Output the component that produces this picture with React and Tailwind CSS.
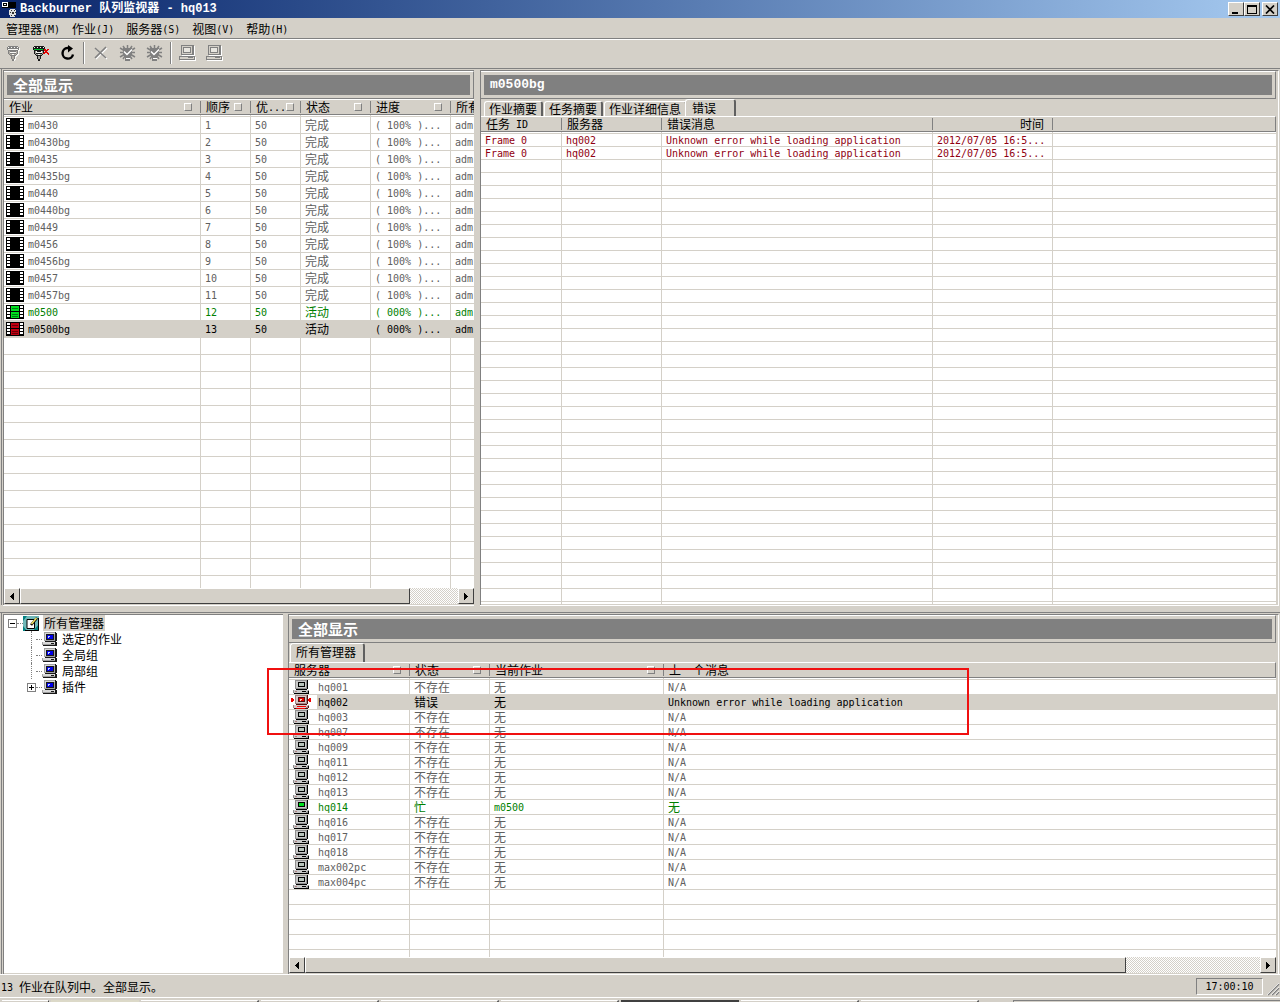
import clsx from "clsx";

// ---------- data ----------

const jobs = [
  ["m0430", "完成"],
  ["m0430bg", "完成"],
  ["m0435", "完成"],
  ["m0435bg", "完成"],
  ["m0440", "完成"],
  ["m0440bg", "完成"],
  ["m0449", "完成"],
  ["m0456", "完成"],
  ["m0456bg", "完成"],
  ["m0457", "完成"],
  ["m0457bg", "完成"],
  ["m0500", "活动", "active"],
  ["m0500bg", "活动", "selected"],
];

const errors = [
  ["Frame 0", "hq002", "Unknown error while loading application", "2012/07/05 16:5..."],
  ["Frame 0", "hq002", "Unknown error while loading application", "2012/07/05 16:5..."],
];

const servers = [
  ["hq001", "不存在", "无", "N/A"],
  ["hq002", "错误", "无", "Unknown error while loading application", "selected"],
  ["hq003", "不存在", "无", "N/A"],
  ["hq007", "不存在", "无", "N/A"],
  ["hq009", "不存在", "无", "N/A"],
  ["hq011", "不存在", "无", "N/A"],
  ["hq012", "不存在", "无", "N/A"],
  ["hq013", "不存在", "无", "N/A"],
  ["hq014", "忙", "m0500", "无", "active"],
  ["hq016", "不存在", "无", "N/A"],
  ["hq017", "不存在", "无", "N/A"],
  ["hq018", "不存在", "无", "N/A"],
  ["max002pc", "不存在", "无", "N/A"],
  ["max004pc", "不存在", "无", "N/A"],
];

const menus = ["管理器(M)", "作业(J)", "服务器(S)", "视图(V)", "帮助(H)"];

const raised =
  "bg-[#d4d0c8] border border-t-white border-l-white border-r-[#404040] border-b-[#404040]";

// ---------- text ----------

// Latin runs are half as wide as the Chinese glyphs
function Txt({ children }) {
  return (
    <span>
      {children.split(/([\x20-\x7e]+)/).map((part, i) =>
        i % 2 ? (
          <span
            key={i}
            className="whitespace-pre align-[1px] font-['DejaVu_Sans_Mono',monospace] text-[10px] leading-[0]"
          >
            {part}
          </span>
        ) : (
          part
        )
      )}
    </span>
  );
}

// ---------- icons ----------

// small bitmap icon: one character per pixel
function Pixels({ rows, colors }) {
  const w = Math.max(...rows.map((r) => r.length));
  return (
    <svg
      width={w}
      height={rows.length}
      viewBox={`0 0 ${w} ${rows.length}`}
      shapeRendering="crispEdges"
      className="block shrink-0"
      aria-hidden="true"
    >
      {rows.flatMap((row, y) =>
        [...row].map((c, x) =>
          colors[c] ? <rect key={`${x}-${y}`} x={x} y={y} width="1" height="1" fill={colors[c]} /> : null
        )
      )}
    </svg>
  );
}

function FilmIcon({ color }) {
  return (
    <svg width="18" height="14" viewBox="0 0 18 14" shapeRendering="crispEdges" className="block shrink-0" aria-hidden="true">
      <rect width="18" height="14" fill="#000" />
      {[1, 4, 7, 10].map((y) => (
        <g key={y} fill="#fff">
          <rect x="1" y={y} width="3" height="2" />
          <rect x="14" y={y} width="3" height="2" />
        </g>
      ))}
      {color && (
        <>
          <rect x="5" y="1" width="8" height="5" fill={color} />
          <rect x="5" y="7" width="8" height="6" fill={color} />
          <path d="M6 3.5h6M6 9.5h6M6 11.5h6" stroke="#000" strokeOpacity=".45" />
        </>
      )}
    </svg>
  );
}

function PcIcon({ screen = "#b8c4bc" }) {
  return (
    <Pixels
      rows={[
        "  ddddddddddddk ",
        "  dggggggggggdk ",
        "  dggkkkkkkkgdk ",
        "  dggksssssk" + "gdk ",
        "  dggkssssskgdk ",
        "  dggkssssskgdk ",
        "  dggkkkkkkkgdk ",
        "  dggggggggggdk ",
        "  ddddddddddddk ",
        "   kkkkkkkkkkk  ",
        "dggggggggggggggd",
        "dgrrgggggkkkkgdk",
        "dggggggggggggddk",
        " kkkkkkkkkkkkkkk",
      ]}
      colors={{ g: "#c8c8c8", d: "#909090", k: "#000", s: screen, r: "#b08080" }}
    />
  );
}

function ErrorPcIcon() {
  return (
    <Pixels
      rows={[
        "    ddddddddddddk   ",
        "    dggggggggggdk   ",
        "    dggkkkkkkkgdk   ",
        "rr  dggkrrrrrkgdk rr",
        "rrr dggkrwwrrkgdkrrr",
        "rrr dggkrwrrrkgdkrrr",
        "rr  dggkkkkkkkgdk rr",
        "    dggggggggggdk   ",
        "    ddddddddddddk   ",
        "     kkkkkkkkkkk    ",
        "  dggggggggggggggd  ",
        "  dgggrrrrrrrrrgdk  ",
        "  dggggggggggggddk  ",
        "   kkrrrrrrrrrkkk   ",
      ]}
      colors={{ w: "#f0e0c0", g: "#dcc8c8", d: "#a08888", k: "#501010", r: "#f00000" }}
    />
  );
}

function TreePcIcon() {
  return (
    <Pixels
      rows={[
        "  gggggggggggk ",
        "  gddddddddddkk",
        "  gdkkkkkkkkgkk",
        "  gdkbbbbbbkgkk",
        "  gdkbwwbbbkgkk",
        "  gdkbwbbbbkgkk",
        "  gdkbbbbbbkgkk",
        "  gdkkkkkkkkgkk",
        "  gggggggggggkk",
        "   kkkkkkkkkkk ",
        "gddddddddddddkk",
        "gddddddddkkkdkk",
        "gggggggggggggkk",
        " kkkkkkkkkkkkkk",
      ]}
      colors={{ w: "#c0d0ff", d: "#d8d8d8", g: "#a0a0a0", k: "#181818", b: "#0000e8" }}
    />
  );
}

function ConnectIcon() {
  return (
    <Pixels
      rows={[
        "  kkkkkkkkkk   ",
        " kwkkwkkwkkwk  ",
        " kkkkkkkkkkkkw ",
        " kwwwwwwwwwwkw ",
        "  kkkkkkkkkkww ",
        "  kgkkkkkkgkw  ",
        "  kgwwwwwwgkw  ",
        "  kgkkkkkkgkw  ",
        "   kggwwggkww  ",
        "    kkkkkkww   ",
        "     kggkww    ",
        "     kggkw     ",
        "     kggkw     ",
        "      kkww     ",
        "      kkw      ",
      ]}
      colors={{ k: "#808080", w: "#f8f8f4", g: "#b0aca4" }}
    />
  );
}

function DisconnectIcon() {
  return (
    <Pixels
      rows={[
        "  kkkkkkkkkk     ",
        " kwkkwkkwkkwk    ",
        " kkkkkkkkkkkk    ",
        " keeeeeeeeekrr rr",
        "  kkkkkkkkkkrrrr ",
        "  kgwkkkkwgk rr  ",
        "  kgwwwwwwgkrrrr ",
        "  kgkkkkkkgrr  rr",
        "   kggwwggk     r",
        "    kkkkkk       ",
        "     kggk        ",
        "     kggk        ",
        "     kggk        ",
        "      kk         ",
        "      kk         ",
      ]}
      colors={{ k: "#181818", w: "#f4f4f0", g: "#a0a098", e: "#00c030", r: "#e00000" }}
    />
  );
}

function RefreshIcon() {
  return (
    <svg width="16" height="16" viewBox="0 0 16 16" className="block" aria-hidden="true">
      <path d="M9.500 3H7.500A5.300 5.300 0 1 0 13 9.500" fill="none" stroke="#000" strokeWidth="2.4" />
      <path d="M8 0l5 3.500L8 7.500z" fill="#000" />
    </svg>
  );
}

function DeleteIcon() {
  return (
    <svg width="16" height="16" viewBox="0 0 16 16" className="block" aria-hidden="true">
      <path d="M3 4l11 10M14 3L3 14" stroke="#fff" strokeWidth="1.4" />
      <path d="M2 3l11 10M13 2L2 13" stroke="#808080" strokeWidth="1.6" />
    </svg>
  );
}

function GearCheckIcon() {
  return (
    <svg width="17" height="16" viewBox="0 0 17 16" className="block" aria-hidden="true">
      <path d="M1 3l15 9M1 12l15-9M8.5 0v15M1 7.5h15M4 1l9 13M13 1L4 14" stroke="#808080" strokeWidth="1.5" />
      <path d="M4 3h9v7l-2 2v4H6v-4l-2-2z" fill="#808080" />
      <path d="M5 6.5l3 3 5-5" fill="none" stroke="#fff" strokeWidth="1.4" />
      <path d="M7 13.5h4" stroke="#fff" />
    </svg>
  );
}

function DisabledPcIcon() {
  return (
    <svg width="17" height="16" viewBox="0 0 17 16" shapeRendering="crispEdges" className="block" aria-hidden="true">
      <path d="M3 1h13v10H3zM1 12h16v4H1z" fill="#fff" />
      <path d="M2 0h13v10H2zM0 11h16v4H0z" fill="#808080" />
      <path d="M3 1h10v8H3zM1 12h14v2H1z" fill="#d4d0c8" />
      <path d="M4 2h8v6H4zM9 12h5v1H9z" fill="#808080" />
      <path d="M5 3h6v4H5z" fill="#e8e6e0" />
    </svg>
  );
}

function AppIcon() {
  return (
    <svg width="16" height="16" viewBox="0 0 16 16" shapeRendering="crispEdges" className="block shrink-0" aria-hidden="true">
      <rect x="1" y="1" width="14" height="6" fill="#000" />
      <path d="M1 1h6v5H1z" fill="#fff" />
      <path d="M2 2h4v3H2z" fill="#000" />
      <path d="M3 3h2v1H3z" fill="#fff" />
      <path d="M9 8h5v1h1v5h-1v2H9v-2H8V9h1z" fill="#e0e0e0" />
      <path d="M10 9h1v1h-1zM13 9h1v1h-1zM11 11h2v2h-2zM9 11h1v1H9zM14 11h1v1h-1zM10 14h1v1h-1zM13 14h1v1h-1z" fill="#303030" />
    </svg>
  );
}

function ManagersIcon() {
  return (
    <svg width="16" height="15" viewBox="0 0 16 15" className="block shrink-0" aria-hidden="true">
      <rect width="16" height="15" fill="#70b8b8" />
      <path d="M0 0h4L0 5zM16 8v7h-6zM0 10v5h4z" fill="#008080" />
      <path d="M4 3.500h7.500v9H4z" fill="#fff" stroke="#000" />
      <path d="M8 9l6-7" stroke="#000" strokeWidth="2.6" />
      <path d="M8.500 8l5-6" stroke="#f0e060" strokeWidth="1.6" />
      <path d="M15.5 2v12.5H2" fill="none" stroke="#000" />
    </svg>
  );
}

// ---------- shared pieces ----------

function PaneTitle({ children, latin }) {
  return (
    <div className="shrink-0 border-t border-r border-b border-t-white border-r-[#808080] border-b-[#808080] p-[3px]">
      <h2
        className={clsx(
          "h-5 bg-[#808080] pl-1.5 font-bold leading-5 text-white",
          latin ? "font-['Liberation_Mono',monospace] text-[13px]" : "text-[15px]"
        )}
      >
        {children}
      </h2>
    </div>
  );
}

function HeadCell({ children, sortable, last, right }) {
  return (
    <th
      className={clsx(
        "h-4 border-t border-b border-t-white border-b-[#808080] bg-[#d4d0c8] p-0 text-left font-normal",
        last && "border-r border-r-[#808080]"
      )}
    >
      <div
        className={clsx(
          "flex h-3 items-center whitespace-nowrap pr-2 pl-[5px]",
          right ? "justify-end" : "justify-between",
          !last && "border-r border-[#808080] shadow-[1px_0_#fff]"
        )}
      >
        <Txt>{children}</Txt>
        {sortable && (
          <span className="size-2 shrink-0 border border-t-white border-r-[#808080] border-b-[#808080] border-l-white" />
        )}
      </div>
    </th>
  );
}

const cell = "whitespace-nowrap border-b border-[#d4d0c8] py-0 pr-0 pl-1 border-r last:border-r-0";

function EmptyRows({ count, columns, height }) {
  return Array.from({ length: count }, (_, i) => (
    <tr key={i} aria-hidden="true">
      {Array.from({ length: columns }, (_, c) => (
        <td key={c} className={clsx(cell, height)} />
      ))}
    </tr>
  ));
}

function Arrow({ left }) {
  return (
    <svg width="4" height="7" viewBox="0 0 4 7" shapeRendering="crispEdges" aria-hidden="true">
      <path d={left ? "M4 0v7L0 3.5z" : "M0 0v7l4-3.5z"} />
    </svg>
  );
}

function ScrollBar({ thumb }) {
  const btn = clsx(raised, "flex size-4 shrink-0 items-center justify-center");
  return (
    <div className="flex h-4 shrink-0 bg-[repeating-conic-gradient(#fff_0_25%,#d4d0c8_0_50%)] bg-[length:2px_2px]">
      <button className={btn} aria-label="向左滚动">
        <Arrow left />
      </button>
      <div className="flex-1">
        <div className={clsx(raised, "h-4", thumb)} />
      </div>
      <button className={btn} aria-label="向右滚动">
        <Arrow />
      </button>
    </div>
  );
}

function Tab({ children, active }) {
  return (
    <button
      role="tab"
      aria-selected={!!active}
      className={clsx(
        "rounded-t-[3px] border-t border-l border-r-2 border-t-white border-l-white border-r-[#606060] text-left leading-3",
        active ? "-ml-[3px] h-full bg-[#d4d0c8] pr-[18px] pb-px pl-1.5" : "h-[15px] px-1"
      )}
    >
      {children}
    </button>
  );
}

// ---------- panes ----------

function JobsPane() {
  const tone = { active: "text-[#008000]", selected: "bg-[#d4d0c8] text-black" };
  const film = { active: "#00e020", selected: "#c00010" };
  return (
    <section className="flex min-h-0 flex-col">
      <PaneTitle>全部显示</PaneTitle>
      <div className="min-h-0 flex-1 overflow-hidden bg-white">
        <table className="w-full table-fixed border-separate border-spacing-0 leading-3">
          <colgroup>
            <col className="w-[197px]" />
            <col className="w-[50px]" />
            <col className="w-[50px]" />
            <col className="w-[70px]" />
            <col className="w-[80px]" />
            <col />
          </colgroup>
          <thead>
            <tr>
              <HeadCell sortable>作业</HeadCell>
              <HeadCell sortable>顺序</HeadCell>
              <HeadCell sortable>优...</HeadCell>
              <HeadCell sortable>状态</HeadCell>
              <HeadCell sortable>进度</HeadCell>
              <HeadCell>所有</HeadCell>
            </tr>
          </thead>
          <tbody>
            <EmptyRows count={1} columns={6} height="h-0.5" />
            {jobs.map(([name, state, kind], i) => (
              <tr key={name} className={kind ? tone[kind] : "text-[#606060]"}>
                <td className={clsx(cell, "h-[17px]")}>
                  <div className="-ml-0.5 flex items-center gap-1">
                    <FilmIcon color={film[kind]} />
                    <Txt>{name}</Txt>
                  </div>
                </td>
                <td className={cell}><Txt>{String(i + 1)}</Txt></td>
                <td className={cell}><Txt>50</Txt></td>
                <td className={cell}>{state}</td>
                <td className={cell}><Txt>{kind ? "( 000% )..." : "( 100% )..."}</Txt></td>
                <td className={cell}><Txt>adm</Txt></td>
              </tr>
            ))}
            <EmptyRows count={40} columns={6} height="h-[17px]" />
          </tbody>
        </table>
      </div>
      <ScrollBar thumb="w-[89%]" />
    </section>
  );
}

function ErrorsPane() {
  return (
    <section className="flex min-h-0 flex-col">
      <PaneTitle latin>m0500bg</PaneTitle>
      <div role="tablist" className="flex h-[17px] shrink-0 items-end gap-px pl-[3px]">
        <Tab>作业摘要</Tab>
        <Tab>任务摘要</Tab>
        <Tab>作业详细信息</Tab>
        <Tab active>错误</Tab>
      </div>
      <div className="min-h-0 flex-1 overflow-hidden bg-white">
        <table className="w-full table-fixed border-separate border-spacing-0 leading-3">
          <colgroup>
            <col className="w-[81px]" />
            <col className="w-[100px]" />
            <col className="w-[271px]" />
            <col className="w-[120px]" />
            <col />
          </colgroup>
          <thead>
            <tr>
              <HeadCell>任务 ID</HeadCell>
              <HeadCell>服务器</HeadCell>
              <HeadCell>错误消息</HeadCell>
              <HeadCell right>时间</HeadCell>
              <HeadCell last>{""}</HeadCell>
            </tr>
          </thead>
          <tbody>
            <EmptyRows count={1} columns={5} height="h-0.5" />
            {errors.map((row, i) => (
              <tr key={i} className="text-[#900010]">
                {row.map((value, c) => (
                  <td key={c} className={clsx(cell, "h-[13px]")}>
                    <Txt>{value}</Txt>
                  </td>
                ))}
                <td className={cell} />
              </tr>
            ))}
            <EmptyRows count={50} columns={5} height="h-[13px]" />
          </tbody>
        </table>
      </div>
    </section>
  );
}

function Expander({ open }) {
  return (
    <button
      aria-label={open ? "折叠" : "展开"}
      className="flex size-[9px] shrink-0 items-center justify-center border border-[#808080] bg-white"
    >
      <svg width="5" height="5" viewBox="0 0 5 5" shapeRendering="crispEdges" aria-hidden="true">
        <path d={open ? "M0 2h5v1H0z" : "M0 2h5v1H0zM2 0h1v5H2z"} />
      </svg>
    </button>
  );
}

function ManagerTree() {
  const items = ["选定的作业", "全局组", "局部组", "插件"];
  return (
    <section className="overflow-hidden bg-white pl-1 leading-4">
      <div className="flex h-4 items-center">
        <Expander open />
        <span className="w-1.5 border-t border-dotted border-[#808080]" />
        <ManagersIcon />
        <span className="ml-1 bg-[#d4d0c8] px-px">所有管理器</span>
      </div>
      <ul>
        {items.map((item, i) => {
          const last = i === items.length - 1;
          return (
            <li key={item} className="flex h-4 items-center pl-[19px]">
              {last ? (
                <Expander />
              ) : (
                <span className="ml-1 h-4 w-[5px] border-l border-dotted border-[#808080]" />
              )}
              <span className="w-1.5 border-t border-dotted border-[#808080]" />
              <span className="w-5">
                <TreePcIcon />
              </span>
              {item}
            </li>
          );
        })}
      </ul>
    </section>
  );
}

function ServersPane() {
  const tone = { active: "text-[#008000]", selected: "bg-[#d4d0c8] text-black" };
  return (
    <section className="flex min-h-0 flex-col">
      <PaneTitle>全部显示</PaneTitle>
      <div role="tablist" className="flex h-[19px] shrink-0 pl-px">
        <button
          role="tab"
          aria-selected="true"
          className="rounded-t-[3px] border-t border-l border-r-2 border-t-white border-l-white border-r-[#606060] pr-[7px] pb-0.5 pl-[5px] leading-3"
        >
          所有管理器
        </button>
      </div>
      <div className="min-h-0 flex-1 overflow-hidden bg-white">
        <table className="w-full table-fixed border-separate border-spacing-0 leading-3">
          <colgroup>
            <col className="w-[121px]" />
            <col className="w-[80px]" />
            <col className="w-[174px]" />
            <col />
          </colgroup>
          <thead>
            <tr>
              <HeadCell sortable>服务器</HeadCell>
              <HeadCell sortable>状态</HeadCell>
              <HeadCell sortable>当前作业</HeadCell>
              <HeadCell last>上一个消息</HeadCell>
            </tr>
          </thead>
          <tbody>
            <EmptyRows count={1} columns={4} height="h-0.5" />
            {servers.map(([name, state, job, message, kind]) => (
              <tr key={name} className={kind ? tone[kind] : "text-[#606060]"}>
                <td className="h-[15px] whitespace-nowrap border-r border-b border-[#d4d0c8] p-0">
                  <div className="flex items-center">
                    <span className={clsx("mr-px w-7 bg-white", kind === "selected" ? "pl-0.5" : "pl-1")}>
                      {kind === "selected" ? <ErrorPcIcon /> : <PcIcon screen={kind && "#00e020"} />}
                    </span>
                    <Txt>{name}</Txt>
                  </div>
                </td>
                <td className={cell}>{state}</td>
                <td className={cell}><Txt>{job}</Txt></td>
                <td className={cell}><Txt>{message}</Txt></td>
              </tr>
            ))}
            <EmptyRows count={30} columns={4} height="h-[15px]" />
          </tbody>
        </table>
      </div>
      <ScrollBar thumb="w-[86%]" />
    </section>
  );
}

// ---------- window chrome ----------

function TitleBar() {
  const btn = clsx(raised, "flex h-[14px] w-4 items-center justify-center");
  return (
    <header className="flex h-[18px] items-center bg-linear-to-r from-[#0a246a] to-[#a6caf0] pr-0.5 pl-px">
      <AppIcon />
      <h1 className="ml-[3px] flex-1 whitespace-pre font-['Liberation_Mono','Noto_Sans_CJK_SC',monospace] text-[12px] font-bold leading-[18px] text-white">
        Backburner 队列监视器 - hq013
      </h1>
      <button className={btn} aria-label="最小化">
        <svg width="10" height="9" viewBox="0 0 10 9" shapeRendering="crispEdges"><path d="M1 7h6v2H1z" /></svg>
      </button>
      <button className={btn} aria-label="最大化">
        <svg width="10" height="9" viewBox="0 0 10 9" shapeRendering="crispEdges">
          <path fillRule="evenodd" d="M0 0h10v9H0zM1 2v6h8V2z" />
        </svg>
      </button>
      <button className={clsx(btn, "ml-0.5")} aria-label="关闭">
        <svg width="10" height="9" viewBox="0 0 10 9"><path d="M1 .5l8 8M9 .5l-8 8" stroke="#000" strokeWidth="1.7" /></svg>
      </button>
    </header>
  );
}

function ToolButton({ label, children }) {
  return (
    <button aria-label={label} className="flex h-6 w-[27px] items-center justify-center">
      {children}
    </button>
  );
}

function ToolSeparator() {
  return <span className="mx-0.5 h-[22px] w-0.5 border-l border-[#808080] bg-white" />;
}

function ToolBar() {
  return (
    <div role="toolbar" className="flex h-[29px] items-center border-b border-[#808080] pb-0.5">
      <ToolButton label="连接"><ConnectIcon /></ToolButton>
      <ToolButton label="断开"><DisconnectIcon /></ToolButton>
      <ToolButton label="刷新"><RefreshIcon /></ToolButton>
      <ToolSeparator />
      <ToolButton label="删除作业"><DeleteIcon /></ToolButton>
      <ToolButton label="激活作业"><GearCheckIcon /></ToolButton>
      <ToolButton label="暂停作业"><GearCheckIcon /></ToolButton>
      <ToolSeparator />
      <ToolButton label="分配服务器"><DisabledPcIcon /></ToolButton>
      <ToolButton label="移除服务器"><DisabledPcIcon /></ToolButton>
    </div>
  );
}

function StatusBar() {
  return (
    <footer className="flex h-[23px] items-center border-t border-white pl-px">
      <p className="flex-1 pt-0.5"><Txt>13 作业在队列中。全部显示。</Txt></p>
      <time className="flex h-[17px] w-[67px] items-center justify-center border border-t-[#808080] border-r-white border-b-white border-l-[#808080]">
        <Txt>17:00:10</Txt>
      </time>
      <svg width="17" height="22" viewBox="0 0 17 22" aria-hidden="true">
        <path d="M5 20L16 9M9 20l7-7M13 20l3-3" stroke="#808080" strokeWidth="1.5" />
        <path d="M4 20L16 8M8 20l8-8M12 20l4-4" stroke="#fff" strokeWidth=".7" />
      </svg>
    </footer>
  );
}

// top edge of the desktop task bar
function TaskBar() {
  const item = "w-[118px] border-t border-r-2 border-t-white border-r-[#606060]";
  return (
    <div className="flex h-[5px] gap-0.5 border-t border-white pt-0.5 pl-0.5" aria-hidden="true">
      <span className="w-[47px] border-t border-r border-t-white border-r-[#404040]" />
      <span className="w-[88px] bg-[#dcd9c8]" />
      <span className={item} />
      <span className={item} />
      <span className={item} />
      <span className={item} />
      <span className="w-[118px] border-t-2 border-[#404040]" />
      <span className={item} />
      <span className={item} />
      <span className="ml-8 flex-1 border-t border-l border-[#808080]" />
    </div>
  );
}

export default function App() {
  return (
    <div className="flex h-screen flex-col overflow-hidden bg-[#d4d0c8] font-['Noto_Sans_CJK_SC',sans-serif] text-[12px] leading-3 text-black">
      <TitleBar />
      <nav className="flex h-[22px] items-center border-b border-white shadow-[inset_0_-1px_#808080]">
        {menus.map((m) => (
          <button key={m} className="px-1.5"><Txt>{m}</Txt></button>
        ))}
      </nav>
      <ToolBar />

      <main className="grid min-h-0 flex-1 grid-rows-[minmax(0,3fr)_minmax(0,2fr)]">
        <div className="grid min-h-0 grid-cols-[3fr_5fr] grid-rows-[minmax(0,1fr)] pb-[7px]">
          <div className="grid min-h-0 min-w-0 grid-rows-[minmax(0,1fr)] pr-1.5 pl-px">
            <div className="grid min-h-0 min-w-0 border-l border-[#808080] pt-px pl-px">
              <div className="grid min-h-0 min-w-0 grid-rows-[minmax(0,1fr)] border border-t-[#808080] border-r-0 border-b-0 border-l-[#808080] pb-px shadow-[0_1px_#fff]">
                <JobsPane />
              </div>
            </div>
          </div>
          <div className="grid min-h-0 min-w-0 grid-rows-[minmax(0,1fr)] pt-px pr-px">
            <div className="grid min-h-0 min-w-0 grid-rows-[minmax(0,1fr)] border border-t-[#808080] border-r-white border-b-0 border-l-[#808080] pr-0.5 pb-px shadow-[0_1px_#fff]">
              <ErrorsPane />
            </div>
          </div>
        </div>

        <div className="grid min-h-0 grid-cols-[9fr_31fr] grid-rows-[minmax(0,1fr)] border-t border-[#808080]">
          <div className="grid min-h-0 min-w-0 grid-rows-[minmax(0,1fr)] pr-[5px] pl-px">
            <div className="grid min-h-0 min-w-0 border-l border-[#808080] pt-px pl-px">
              <div className="grid min-h-0 min-w-0 border-t border-l border-[#808080] pb-px">
                <ManagerTree />
              </div>
            </div>
          </div>
          <div className="relative grid min-h-0 min-w-0 grid-rows-[minmax(0,1fr)] pt-px pr-px">
            <div className="grid min-h-0 min-w-0 grid-rows-[minmax(0,1fr)] border border-t-[#808080] border-r-white border-b-0 border-l-[#808080] pr-0.5 pb-px">
              <ServersPane />
            </div>
            {/* highlight around the failed server */}
            <div className="pointer-events-none absolute top-[55px] -left-[21px] h-[67px] w-[702px] border-2 border-[#f01010]" />
          </div>
        </div>
      </main>

      <StatusBar />
      <TaskBar />
    </div>
  );
}
